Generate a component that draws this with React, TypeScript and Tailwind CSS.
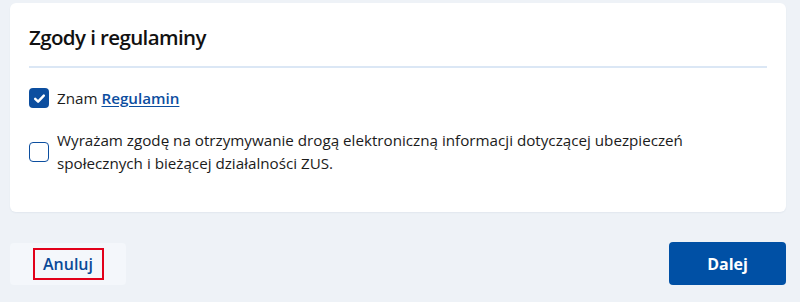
export default function App() {
  return (
    <div
      className="min-h-[302px] w-[800px] bg-[#eef2f7] pt-[3px] pl-[10px] pr-[14px]"
      style={{ fontFamily: '"Open Sans", "Liberation Sans", sans-serif' }}
    >
      <section className="rounded-[6px] bg-white px-[19px] pt-[20px] pb-[37px] shadow-[0_1px_2px_rgba(30,60,110,0.06)]">
        <h2 className="pb-[15px] text-[20.5px] leading-[28px] font-[550] tracking-[-0.6px] text-[#111111]">
          Zgody i regulaminy
        </h2>
        <div className="h-[2px] bg-[#dbe7f5]" />

        <label className="mt-[19px] flex items-center gap-[8px]">
          <span className="flex h-[20px] w-[20px] shrink-0 items-center justify-center rounded-[4px] bg-[#0c4e9f]">
            <svg viewBox="0 0 16 16" className="h-[15px] w-[15px]" fill="none">
              <path
                d="M3.4 8.4 6.5 11.3 12.6 4.9"
                stroke="white"
                strokeWidth="2.6"
                strokeLinecap="round"
                strokeLinejoin="round"
              />
            </svg>
          </span>
          <span className="text-[15.2px] leading-[22px] text-[#1b1b1b]">
            Znam{" "}
            <a className="font-semibold text-[#0c4e9f] underline underline-offset-2">
              Regulamin
            </a>
          </span>
        </label>

        <label className="mt-[20px] flex items-center gap-[8px]">
          <span className="h-[20px] w-[20px] shrink-0 rounded-[4px] border-[1.5px] border-[#0c4e9f] bg-white" />
          <span className="text-[15.2px] leading-[23px] text-[#1b1b1b]">
            Wyrażam zgodę na otrzymywanie drogą elektroniczną informacji dotyczącej ubezpieczeń
            <br />
            społecznych i bieżącej działalności ZUS.
          </span>
        </label>
      </section>

      <div className="mt-[30px] flex items-center justify-between">
        <button className="flex h-[42px] w-[116px] items-center justify-center rounded-[4px] bg-[#f4f7fb]">
          <span className="flex h-[32px] w-[71px] items-center justify-center border-2 border-[#e2001a] text-[16px] font-semibold text-[#0a4a98]">
            Anuluj
          </span>
        </button>
        <button className="h-[43px] w-[117px] rounded-[4px] bg-[#0050a5] text-[16px] font-bold text-white">
          Dalej
        </button>
      </div>
    </div>
  );
}
